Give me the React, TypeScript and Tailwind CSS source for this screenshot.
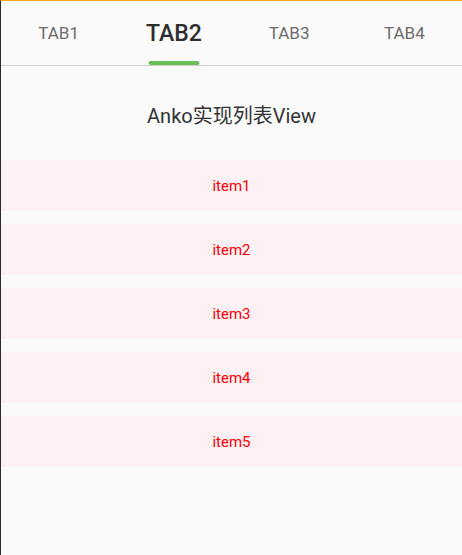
const tabs = ["TAB1", "TAB2", "TAB3", "TAB4"];
const items = ["item1", "item2", "item3", "item4", "item5"];

export default function App() {
  return (
    <div
      className="h-[555px] w-[462px] overflow-hidden border-l border-t border-l-[#2b2b2b] border-t-[#f5a623] bg-[#fafafa]"
      style={{ fontFamily: "Roboto, 'Noto Sans CJK SC', sans-serif" }}
    >
      {/* Tab bar */}
      <div className="flex h-[65px] border-b border-[#cfcfcf]">
        {tabs.map((t, i) => (
          <div key={t} className="relative flex flex-1 items-center justify-center pt-[1px]">
            {i === 1 ? (
              <>
                <span className="text-[23px] font-medium leading-none text-[#2e2e2e]">{t}</span>
                <span className="absolute bottom-0 left-1/2 h-[4px] w-[51px] -translate-x-1/2 rounded-full bg-[#6abf55]" />
              </>
            ) : (
              <span className="text-[17px] leading-none text-[#6b6b6b]">{t}</span>
            )}
          </div>
        ))}
      </div>

      {/* Title */}
      <div className="pb-[29px] pt-[36px] text-center text-[20px] leading-[29px] text-[#333]">
        Anko实现列表View
      </div>

      {/* List */}
      <div className="flex flex-col gap-[13px]">
        {items.map((it) => (
          <div
            key={it}
            className="flex h-[51px] items-center justify-center bg-[#fff0f4] pt-[1px] text-[15px] text-[#ff0000]"
          >
            {it}
          </div>
        ))}
      </div>
    </div>
  );
}
